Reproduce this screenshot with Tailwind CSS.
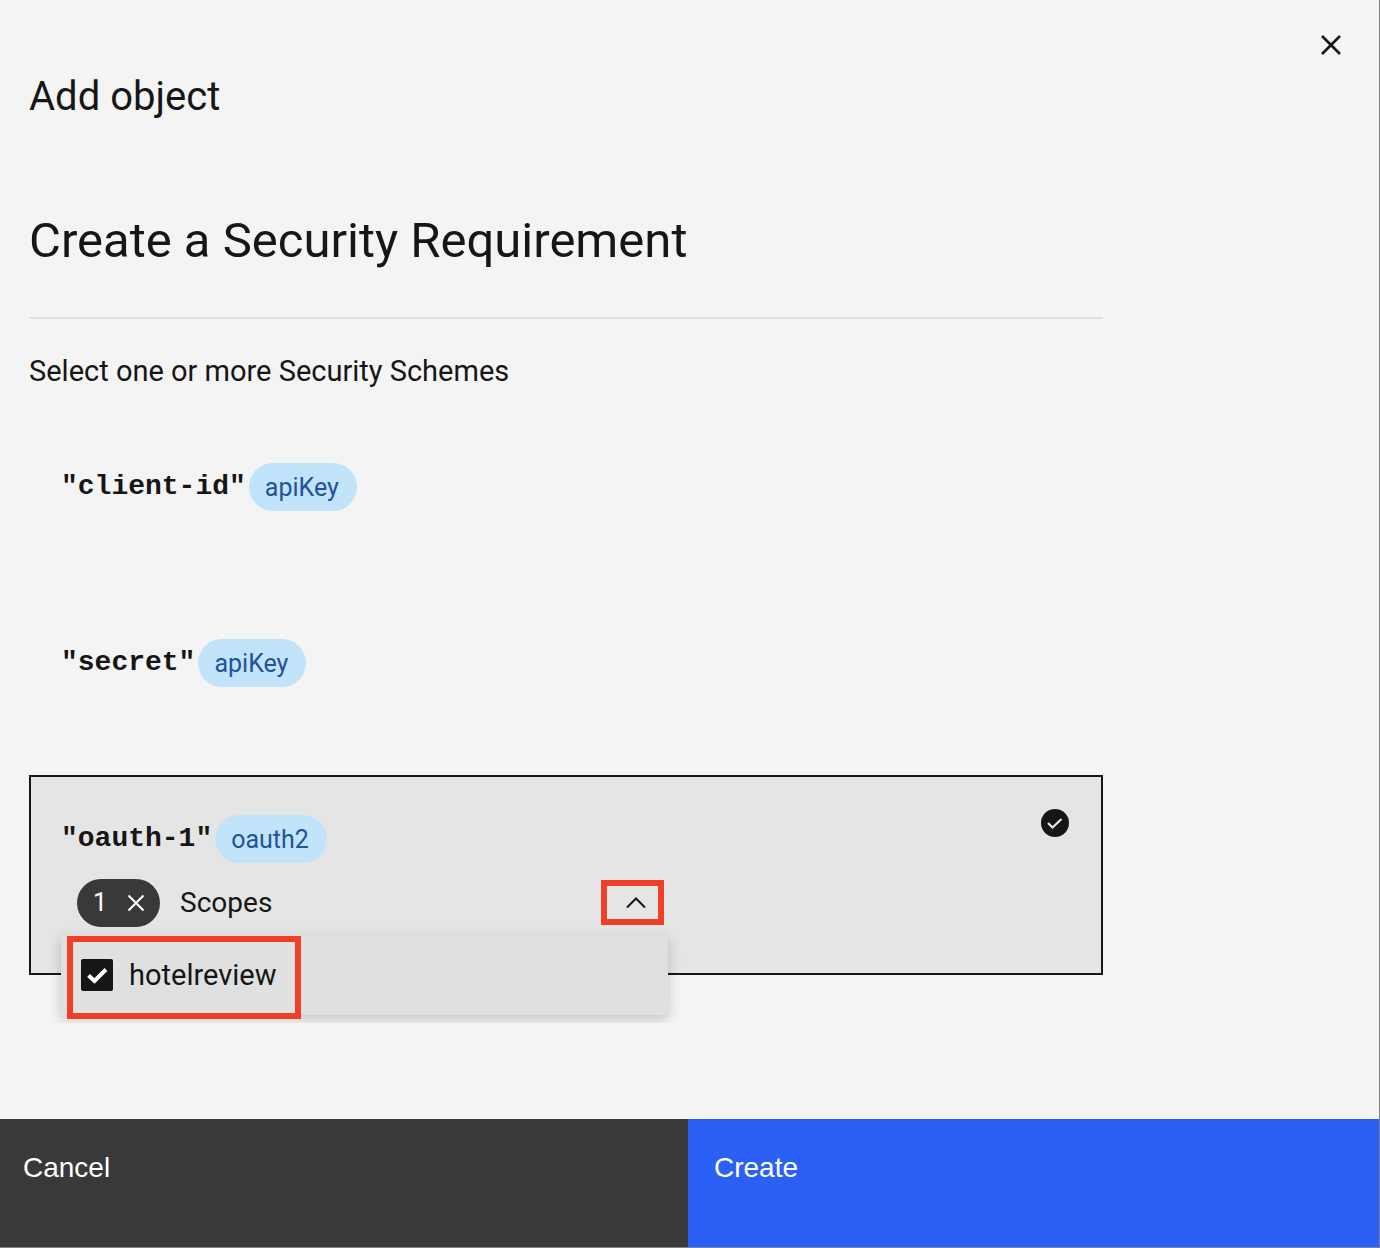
<!DOCTYPE html>
<html lang="en">
<head>
<meta charset="utf-8">
<title>Add object</title>
<script src="https://cdn.jsdelivr.net/npm/@tailwindcss/browser@4"></script>
</head>
<body class="bg-[#f4f4f4] text-[#161616] font-[Roboto,sans-serif]">
<div role="dialog" aria-labelledby="dialog-title" class="flex min-h-screen flex-col border-r border-b border-[#828282]">
  <header class="flex h-[193px] items-start justify-between pt-6 pr-[27px] pl-[29px]">
    <h2 id="dialog-title" class="pt-[47px] text-[40px] leading-[52px]">Add object</h2>
    <button type="button" aria-label="Close" class="grid size-[42px] place-items-center">
      <svg class="size-[42px]" viewBox="0 0 42 42" fill="none" stroke="#161616" stroke-width="2.6"><path d="M12 12l18 18M30 12l-18 18"/></svg>
    </button>
  </header>

  <main class="grow overflow-hidden">
    <div class="w-full max-w-[1132px] overflow-hidden px-[29px] pb-12">
      <h1 class="border-b-2 border-[#e0e0e0] pt-4 pb-11 text-[49px] leading-[64px]">Create a Security Requirement</h1>
      <p class="py-8 text-[29px] leading-10">Select one or more Security Schemes</p>

      <ul>
        <li class="flex h-44 border-2 border-transparent px-[30px] pt-[38px]">
          <div class="flex h-12 items-center">
            <strong class="font-['Liberation_Mono',monospace] text-[28px] leading-10">"client-id"</strong>
            <span class="ml-[3px] flex h-12 items-center rounded-full bg-[#c2e4fb] pt-0.5 pr-[18px] pl-4 text-[25px] text-[#21529a]">apiKey</span>
          </div>
        </li>
        <li class="flex h-44 border-2 border-transparent px-[30px] pt-[38px]">
          <div class="flex h-12 items-center">
            <strong class="font-['Liberation_Mono',monospace] text-[28px] leading-10">"secret"</strong>
            <span class="ml-[3px] flex h-12 items-center rounded-full bg-[#c2e4fb] pt-0.5 pr-[18px] pl-4 text-[25px] text-[#21529a]">apiKey</span>
          </div>
        </li>
        <li class="flex h-[200px] items-start justify-between border-2 border-[#161616] bg-[#e5e5e5] pr-8 pl-[30px]">
          <div class="w-[607px] pt-[38px]">
            <div class="flex h-12 items-center">
              <strong class="font-['Liberation_Mono',monospace] text-[28px] leading-10">"oauth-1"</strong>
              <span class="ml-[3px] flex h-12 items-center rounded-full bg-[#c2e4fb] pt-0.5 pr-[18px] pl-4 text-[25px] text-[#21529a]">oauth2</span>
            </div>
            <div class="relative mt-2">
              <div class="flex h-16 items-center pl-4">
                <span class="flex h-12 items-center gap-[17px] rounded-full bg-[#393939] pr-3 pl-4 text-[25px] text-white">1
                  <button type="button" aria-label="Clear selection" class="grid size-6 place-items-center">
                    <svg class="size-6" viewBox="0 0 24 24" fill="none" stroke="#fff" stroke-width="2"><path d="M4.500 4.500l15 15M19.500 4.500l-15 15"/></svg>
                  </button>
                </span>
                <span id="scopes-label" class="ml-5 text-[28px] leading-10">Scopes</span>
                <button type="button" aria-label="Close menu" aria-expanded="true" class="relative mr-4 ml-auto grid size-8 place-items-center">
                  <svg class="size-8" viewBox="0 0 32 32" fill="none" stroke="#161616" stroke-width="2"><path d="M7 20.500l9-9 9 9"/></svg>
                  <span class="absolute -top-[7px] -left-[19px] h-[45px] w-[63px] border-[6px] border-[#ee4026]"></span>
                </button>
              </div>
              <div role="group" aria-labelledby="scopes-label" class="absolute inset-x-0 top-16 z-10 h-20 bg-[#e0e0e0] shadow-[0_4px_12px_rgba(0,0,0,0.2)]">
                <label class="flex h-20 items-center gap-4 pl-5 text-[29px] leading-10">
                  <span class="relative size-8">
                    <input type="checkbox" checked class="block size-8 appearance-none rounded-xs bg-[#161616]">
                    <svg class="pointer-events-none absolute inset-0 size-8" viewBox="0 0 32 32" fill="none" stroke="#fff" stroke-width="4"><path d="M7.500 16.500l6 5.500L25 10.500"/></svg>
                  </span>
                  hotelreview
                </label>
                <span class="absolute top-px left-[6px] h-[83px] w-[234px] border-[6px] border-[#ee4026]"></span>
              </div>
            </div>
          </div>
          <svg class="mt-8 size-7" viewBox="0 0 28 28" role="img" aria-label="Selected"><circle cx="14" cy="14" r="14" fill="#161616"/><path d="M7 14l4.500 4.500 9-8.500" fill="none" stroke="#e5e5e5" stroke-width="2.2"/></svg>
        </li>
      </ul>
    </div>
  </main>

  <footer class="grid grid-cols-[688fr_691fr] font-['Liberation_Sans',Arial,sans-serif] text-[28px] leading-8 text-white">
    <button type="button" class="flex h-32 items-start bg-[#393939] pt-[33px] pl-[23px]">Cancel</button>
    <button type="button" class="flex h-32 items-start bg-[#2b60f6] pt-[33px] pl-[26px]">Create</button>
  </footer>
</div>
</body>
</html>
